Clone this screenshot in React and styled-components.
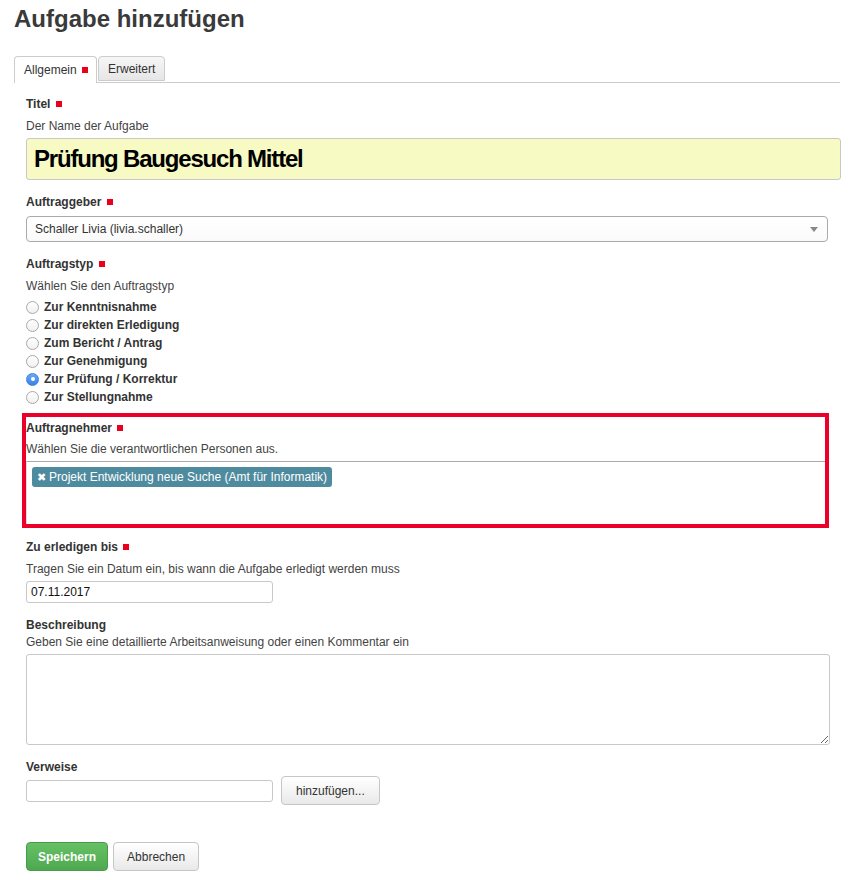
import styled, { createGlobalStyle } from "styled-components";

const GlobalStyle = createGlobalStyle`
  body {
    margin: 0;
    background: #fff;
    font-family: "Liberation Sans", Arial, sans-serif;
    font-size: 12px;
    color: #333;
  }
`;

const Page = styled.div`
  width: 862px;
  padding: 5px 0 0 14px;
  box-sizing: border-box;
`;

const Heading = styled.h1`
  margin: 0;
  font-size: 24px;
  line-height: 27px;
  font-weight: bold;
  color: #3a3a3a;
`;

const Tabs = styled.div`
  display: flex;
  gap: 1px;
  margin-top: 24px;
  width: 826px;
  border-bottom: 1px solid #ccc;
  height: 26px;
`;

const Tab = styled.div`
  display: flex;
  align-items: center;
  height: ${(p) => (p.$active ? "27px" : "25px")};
  padding: ${(p) => (p.$active ? "0 8px 0 9px" : "0 9px")};
  border: 1px solid #ccc;
  border-bottom: ${(p) => (p.$active ? "none" : "1px solid #ccc")};
  border-radius: 4px 4px 0 0;
  box-sizing: border-box;
  background: ${(p) =>
    p.$active ? "#fff" : "linear-gradient(#f6f6f6, #e6e6e6)"};
  color: #333;
  font-size: 12px;
  white-space: pre;
`;

const Required = styled.span`
  display: inline-block;
  width: 6px;
  height: 6px;
  margin-left: ${(p) => p.$ml ?? 2}px;
  background: #e8001c;
  vertical-align: 1px;
`;

const Form = styled.div`
  padding: 13px 0 0 12px;
`;

const Group = styled.div`
  margin-bottom: ${(p) => p.$after ?? 14}px;
`;

const Label = styled.div`
  font-weight: bold;
  line-height: 16px;
  color: #333;
  margin-bottom: ${(p) => p.$gap ?? 6}px;
`;

const Hint = styled.div`
  line-height: 16px;
  color: #444;
  margin-bottom: ${(p) => p.$gap ?? 4}px;
`;

const TitleInput = styled.div`
  width: 815px;
  height: 42px;
  box-sizing: border-box;
  border: 1px solid #c8c8c8;
  border-radius: 3px;
  background: #f8fac4;
  padding: 0 7px;
  display: flex;
  align-items: center;
  font-size: 24px;
  font-weight: bold;
  color: #000;
  letter-spacing: -1.2px;
`;

const Select = styled.div`
  width: 802px;
  height: 26px;
  box-sizing: border-box;
  border: 1px solid #aaa;
  border-radius: 4px;
  background: linear-gradient(#fff, #fafafa);
  padding: 0 8px;
  display: flex;
  align-items: center;
  justify-content: space-between;
  color: #333;
`;

const Caret = styled.span`
  width: 0;
  height: 0;
  border-left: 4px solid transparent;
  border-right: 4px solid transparent;
  border-top: 5px solid #888;
  margin-right: 1px;
`;

const RadioList = styled.div`
  display: flex;
  flex-direction: column;
`;

const RadioRow = styled.div`
  display: flex;
  align-items: center;
  gap: 5px;
  height: 18px;
  font-weight: bold;
  color: #333;
`;

const RadioDot = styled.span`
  width: 13px;
  height: 13px;
  box-sizing: border-box;
  border-radius: 50%;
  flex-shrink: 0;
  display: flex;
  align-items: center;
  justify-content: center;
  border: 1px solid ${(p) => (p.$checked ? "#3b82e6" : "#a9a9a9")};
  background: ${(p) =>
    p.$checked ? "linear-gradient(#6aa8f5, #3b82e6)" : "linear-gradient(#fff, #f0f0f0)"};

  &::after {
    content: "";
    display: ${(p) => (p.$checked ? "block" : "none")};
    width: 4px;
    height: 4px;
    border-radius: 50%;
    background: #fff;
  }
`;

const Annotated = styled.div`
  margin: 7px 0 11px -4px;
  width: 807px;
  box-sizing: border-box;
  border: 4px solid #ea0029;
  padding-top: 3px;
`;

const MultiBox = styled.div`
  height: 63px;
  box-sizing: border-box;
  border-top: 1px solid #aaa;
  border-left: 1px solid #ddd;
  padding: 5px;
`;

const TagChip = styled.span`
  display: inline-flex;
  align-items: center;
  gap: 3px;
  height: 20px;
  padding: 0 5px;
  border-radius: 3px;
  background: #4f8b9e;
  color: #fff;
  font-size: 12px;
`;

const TextInput = styled.div`
  width: 247px;
  height: 22px;
  box-sizing: border-box;
  border: 1px solid #c8c8c8;
  border-radius: 3px;
  padding: 0 4px;
  display: flex;
  align-items: center;
  color: #111;
  font-size: 12px;
`;

const TextArea = styled.textarea`
  display: block;
  width: 804px;
  height: 91px;
  box-sizing: border-box;
  border: 1px solid #c8c8c8;
  border-radius: 3px;
  margin: 0;
  font-family: inherit;
`;

const InlineRow = styled.div`
  display: flex;
  align-items: center;
  gap: 8px;
`;

const Button = styled.button`
  height: 29px;
  padding: 0 ${(p) => p.$pad ?? 13}px;
  box-sizing: border-box;
  border-radius: 4px;
  font-family: "Liberation Sans", Arial, sans-serif;
  font-size: 12px;
  cursor: pointer;
  border: 1px solid ${(p) => (p.$primary ? "#4a9a4a" : "#c6c6c6")};
  background: ${(p) =>
    p.$primary
      ? "linear-gradient(#66c166, #4fa84f)"
      : "linear-gradient(#fff, #e9e9e9)"};
  color: ${(p) => (p.$primary ? "#fff" : "#333")};
  font-weight: ${(p) => (p.$primary ? "bold" : "normal")};
`;

const Actions = styled.div`
  display: flex;
  gap: 5px;
  margin-top: 37px;
`;

const radios = [
  "Zur Kenntnisnahme",
  "Zur direkten Erledigung",
  "Zum Bericht / Antrag",
  "Zur Genehmigung",
  "Zur Prüfung / Korrektur",
  "Zur Stellungnahme",
];

export default function App() {
  return (
    <>
      <GlobalStyle />
      <Page>
        <Heading>Aufgabe hinzufügen</Heading>
        <Tabs>
          <Tab $active>
            Allgemein <Required $ml={2} />
          </Tab>
          <Tab>Erweitert</Tab>
        </Tabs>
        <Form>
          <Group>
            <Label>
              Titel <Required />
            </Label>
            <Hint>Der Name der Aufgabe</Hint>
            <TitleInput>Prüfung Baugesuch Mittel</TitleInput>
          </Group>

          <Group>
            <Label>
              Auftraggeber <Required />
            </Label>
            <Select>
              Schaller Livia (livia.schaller)
              <Caret />
            </Select>
          </Group>

          <Group $after={0}>
            <Label>
              Auftragstyp <Required />
            </Label>
            <Hint>Wählen Sie den Auftragstyp</Hint>
            <RadioList>
              {radios.map((r) => (
                <RadioRow key={r}>
                  <RadioDot $checked={r === "Zur Prüfung / Korrektur"} />
                  {r}
                </RadioRow>
              ))}
            </RadioList>
          </Group>

          <Annotated>
            <Label $gap={5}>
              Auftragnehmer <Required />
            </Label>
            <Hint>Wählen Sie die verantwortlichen Personen aus.</Hint>
            <MultiBox>
              <TagChip>
                <span style={{ fontSize: 11 }}>✖</span>
                Projekt Entwicklung neue Suche (Amt für Informatik)
              </TagChip>
            </MultiBox>
          </Annotated>

          <Group>
            <Label>
              Zu erledigen bis <Required />
            </Label>
            <Hint $gap={4}>
              Tragen Sie ein Datum ein, bis wann die Aufgabe erledigt werden muss
            </Hint>
            <TextInput>07.11.2017</TextInput>
          </Group>

          <Group>
            <Label $gap={1}>Beschreibung</Label>
            <Hint>
              Geben Sie eine detaillierte Arbeitsanweisung oder einen Kommentar ein
            </Hint>
            <TextArea />
          </Group>

          <Group $after={0}>
            <Label $gap={1}>Verweise</Label>
            <InlineRow>
              <TextInput />
              <Button $pad={14}>hinzufügen...</Button>
            </InlineRow>
          </Group>

          <Actions>
            <Button $primary $pad={11}>
              Speichern
            </Button>
            <Button $pad={13}>Abbrechen</Button>
          </Actions>
        </Form>
      </Page>
    </>
  );
}
